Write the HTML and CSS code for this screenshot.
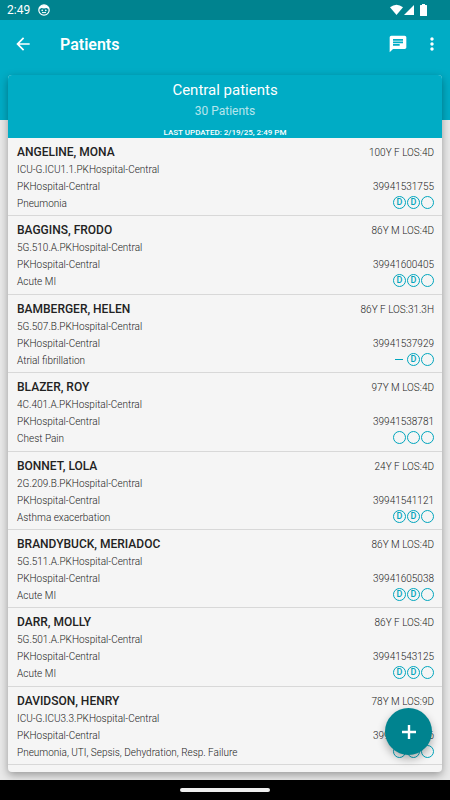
FILE: index.html
```
<!DOCTYPE html>
<html lang="en">
<head>
    <meta charset="UTF-8">
    <meta name="viewport" content="width=device-width, initial-scale=1.0">
    <title>Patients</title>
    <link rel="stylesheet" href="styles.css">
</head>
<body>

<div class="status-bar">
    <span class="time">2:49</span>
    <svg class="face" viewBox="0 0 12 12">
        <circle cx="6" cy="6" r="5.200" fill="none" stroke="#fff" stroke-width="1.200"/>
        <path d="M1 5.400C1.200 2.500 3.500 1 6 1s4.800 1.500 5 4.400L8.600 4 6 4.600 3.400 4z" fill="#fff"/>
        <circle cx="4.200" cy="6.400" r=".8" fill="#fff"/>
        <circle cx="7.800" cy="6.400" r=".8" fill="#fff"/>
        <path d="M4 8.600h4" stroke="#fff"/>
    </svg>
    <svg class="signals" viewBox="0 0 40 14" fill="#fff">
        <path d="M0 4.200Q6.500-.9 13 4.200L6.500 12z"/>
        <path d="M24 2v10H14z"/>
        <path d="M32 1h3v1h1.500q.5 0 .5.500v10q0 .5-.5.500h-6q-.5 0-.5-.500v-10q0-.5.5-.500H32z"/>
    </svg>
</div>

<header class="toolbar">
    <button class="icon-btn" aria-label="Back">
        <svg viewBox="0 0 24 24"><path d="M20 11H7.830l5.590-5.590L12 4l-8 8 8 8 1.410-1.410L7.830 13H20v-2z"/></svg>
    </button>
    <h1>Patients</h1>
    <button class="icon-btn" aria-label="Messages">
        <svg viewBox="0 0 24 24"><path d="M20 2H4c-1.100 0-1.990.9-1.990 2L2 22l4-4h14c1.100 0 2-.9 2-2V4c0-1.100-.9-2-2-2zM6 9h12v2H6V9zm8 5H6v-2h8v2zm4-6H6V6h12v2z"/></svg>
    </button>
    <button class="icon-btn more" aria-label="More options">
        <svg viewBox="0 0 24 24"><path d="M12 8c1.100 0 2-.9 2-2s-.9-2-2-2-2 .9-2 2 .9 2 2 2zm0 2c-1.100 0-2 .9-2 2s.9 2 2 2 2-.9 2-2-.9-2-2-2zm0 6c-1.100 0-2 .9-2 2s.9 2 2 2 2-.9 2-2-.9-2-2-2z"/></svg>
    </button>
</header>

<main>
    <section class="card">
        <div class="card-head">
            <h2>Central patients</h2>
            <p class="count">30 Patients</p>
            <p class="updated">LAST UPDATED: 2/19/25, 2:49 PM</p>
        </div>
        <ul class="patients">
            <li>
                <div class="info">
                    <h3>ANGELINE, MONA</h3>
                    <p>ICU-G.ICU1.1.PKHospital-Central</p>
                    <p>PKHospital-Central</p>
                    <p>Pneumonia</p>
                </div>
                <div class="stay">
                    <p class="los">100Y F LOS:4D</p>
                    <p>39941531755</p>
                    <div class="marks"><span>D</span><span>D</span><span></span></div>
                </div>
            </li>
            <li>
                <div class="info">
                    <h3>BAGGINS, FRODO</h3>
                    <p>5G.510.A.PKHospital-Central</p>
                    <p>PKHospital-Central</p>
                    <p>Acute MI</p>
                </div>
                <div class="stay">
                    <p class="los">86Y M LOS:4D</p>
                    <p>39941600405</p>
                    <div class="marks"><span>D</span><span>D</span><span></span></div>
                </div>
            </li>
            <li>
                <div class="info">
                    <h3>BAMBERGER, HELEN</h3>
                    <p>5G.507.B.PKHospital-Central</p>
                    <p>PKHospital-Central</p>
                    <p>Atrial fibrillation</p>
                </div>
                <div class="stay">
                    <p class="los">86Y F LOS:31.3H</p>
                    <p>39941537929</p>
                    <div class="marks"><i class="dash"></i><span>D</span><span></span></div>
                </div>
            </li>
            <li>
                <div class="info">
                    <h3>BLAZER, ROY</h3>
                    <p>4C.401.A.PKHospital-Central</p>
                    <p>PKHospital-Central</p>
                    <p>Chest Pain</p>
                </div>
                <div class="stay">
                    <p class="los">97Y M LOS:4D</p>
                    <p>39941538781</p>
                    <div class="marks"><span></span><span></span><span></span></div>
                </div>
            </li>
            <li>
                <div class="info">
                    <h3>BONNET, LOLA</h3>
                    <p>2G.209.B.PKHospital-Central</p>
                    <p>PKHospital-Central</p>
                    <p>Asthma exacerbation</p>
                </div>
                <div class="stay">
                    <p class="los">24Y F LOS:4D</p>
                    <p>39941541121</p>
                    <div class="marks"><span>D</span><span>D</span><span></span></div>
                </div>
            </li>
            <li>
                <div class="info">
                    <h3>BRANDYBUCK, MERIADOC</h3>
                    <p>5G.511.A.PKHospital-Central</p>
                    <p>PKHospital-Central</p>
                    <p>Acute MI</p>
                </div>
                <div class="stay">
                    <p class="los">86Y M LOS:4D</p>
                    <p>39941605038</p>
                    <div class="marks"><span>D</span><span>D</span><span></span></div>
                </div>
            </li>
            <li>
                <div class="info">
                    <h3>DARR, MOLLY</h3>
                    <p>5G.501.A.PKHospital-Central</p>
                    <p>PKHospital-Central</p>
                    <p>Acute MI</p>
                </div>
                <div class="stay">
                    <p class="los">86Y F LOS:4D</p>
                    <p>39941543125</p>
                    <div class="marks"><span>D</span><span>D</span><span></span></div>
                </div>
            </li>
            <li>
                <div class="info">
                    <h3>DAVIDSON, HENRY</h3>
                    <p>ICU-G.ICU3.3.PKHospital-Central</p>
                    <p>PKHospital-Central</p>
                    <p>Pneumonia, UTI, Sepsis, Dehydration, Resp. Failure</p>
                </div>
                <div class="stay">
                    <p class="los">78Y M LOS:9D</p>
                    <p>39941535226</p>
                    <div class="marks"><span></span><span></span><span></span></div>
                </div>
            </li>
        </ul>
    </section>
    <button class="fab" aria-label="Add patient">
        <svg viewBox="0 0 24 24"><path d="M19 13.200h-5.800V19h-2.400v-5.800H5v-2.400h5.800V5h2.400v5.800H19z"/></svg>
    </button>
</main>

<footer class="nav-bar"><div class="handle"></div></footer>

</body>
</html>
```
FILE: styles.css
```
*{
    box-sizing: border-box;
}
body{
    margin: 0;
    min-height: 100vh;
    display: flex;
    flex-direction: column;
    font-family: Roboto, "Liberation Sans", sans-serif;
    background: linear-gradient(#00acc5 120px, #e9e9e9 120px);
    color: #222;
}
h1,h2,h3,p,ul{
    margin: 0;
    padding: 0;
}
button{
    border: 0;
    padding: 0;
    cursor: pointer;
}

.status-bar{
    display: flex;
    align-items: center;
    gap: 8px;
    height: 20px;
    padding: 0 20px 0 7px;
    background: #00838f;
    color: #fff;
}
.time{
    font-size: 12px;
}
.face{
    width: 12px;
    height: 12px;
}
.signals{
    width: 40px;
    height: 14px;
    margin-left: auto;
}

.toolbar{
    display: flex;
    align-items: center;
    height: 48px;
    padding: 0 8px 0 13px;
    color: #fff;
}
.toolbar h1{
    flex: 1;
    margin-left: 27px;
    font-size: 16px;
    font-weight: 600;
}
.icon-btn{
    display: flex;
    background: none;
}
.icon-btn svg{
    width: 20px;
    height: 20px;
    fill: #fff;
}
.more{
    margin-left: 14px;
}

main{
    flex: 1;
    display: flex;
    position: relative;
    padding: 7px 8px 8px;
}
.card{
    flex: 1;
    display: flex;
    flex-direction: column;
    overflow: hidden;
    border-radius: 4px;
    background: #f5f5f5;
    box-shadow: 0 3px 8px rgba(0,0,0,.35);
}
.card-head{
    background: #00acc5;
    color: #fff;
    text-align: center;
    padding-top: 4px;
}
.card-head h2{
    font-size: 15px;
    line-height: 22px;
    font-weight: 400;
}
.count{
    font-size: 12px;
    line-height: 20px;
    opacity: .7;
}
.updated{
    padding-top: 6px;
    font-size: 8px;
    line-height: 11px;
    font-weight: 500;
}

.patients{
    flex: 1;
    display: flex;
    flex-direction: column;
    padding-bottom: 7px;
    list-style: none;
}
.patients li{
    flex: 1;
    display: flex;
    justify-content: space-between;
    padding: 5px 8px 2px 9px;
    border-bottom: 1px solid #d8d8d8;
    font-size: 10px;
    line-height: 17px;
    font-weight: 300;
}
.info h3{
    font-size: 12px;
    line-height: 18px;
    font-weight: 500;
}
.stay{
    text-align: right;
}
.los{
    padding-top: 1px;
    margin-bottom: 17px;
}
.marks{
    display: flex;
    justify-content: flex-end;
    gap: 1px;
}
.marks span{
    width: 13px;
    height: 13px;
    margin-top: 1px;
    border: 1px solid #00a5bd;
    border-radius: 50%;
    color: #00a5bd;
    font-size: 9px;
    line-height: 11px;
    font-weight: 500;
    text-align: center;
}
.dash{
    width: 8px;
    height: 1px;
    margin: 7px 3px 0;
    background: #00a5bd;
}

.fab{
    position: absolute;
    right: 18px;
    bottom: 25px;
    width: 47px;
    height: 47px;
    border-radius: 50%;
    background: #00838f;
    box-shadow: 0 4px 8px rgba(0,0,0,.3);
}
.fab svg{
    display: block;
    width: 24px;
    height: 24px;
    margin: auto;
    fill: #fff;
}

.nav-bar{
    display: flex;
    align-items: center;
    justify-content: center;
    height: 20px;
    background: #000;
}
.handle{
    width: 20%;
    height: 4px;
    border-radius: 2px;
    background: #eee;
}
```
